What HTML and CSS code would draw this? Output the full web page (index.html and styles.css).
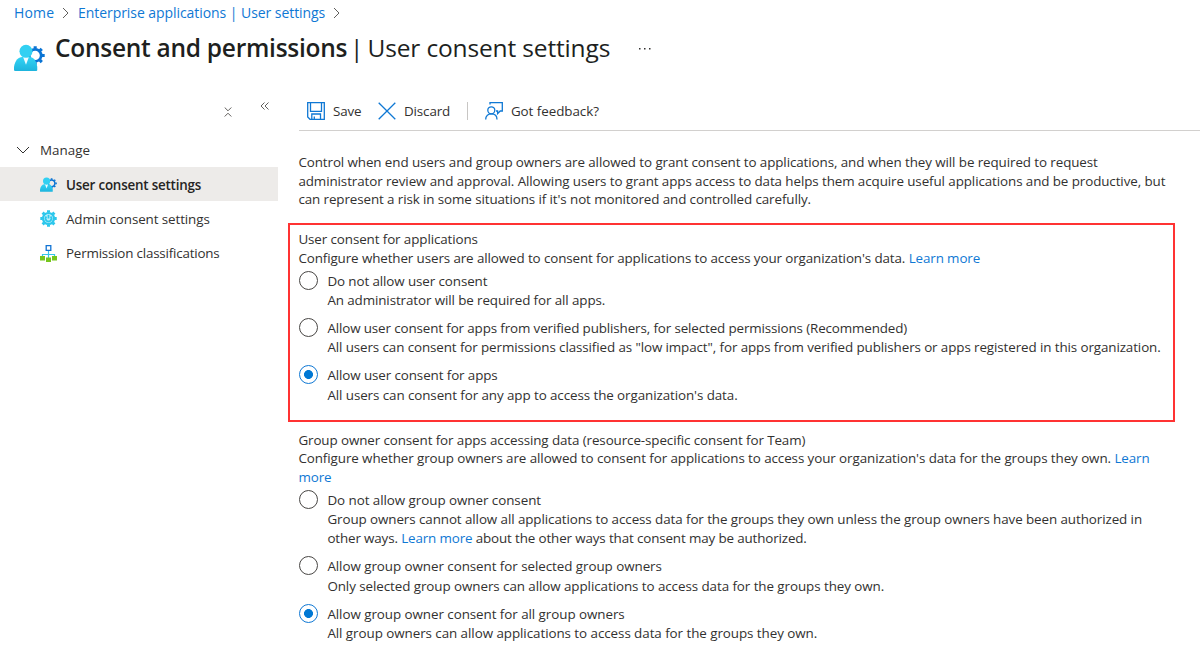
FILE: index.html
```html
<!DOCTYPE html>
<html lang="en">
<head>
<meta charset="utf-8">
<title>Consent and permissions</title>
<link rel="stylesheet" href="styles.css">
</head>
<body>
<svg width="0" height="0" class="defs" aria-hidden="true">
  <defs>
    <linearGradient id="cyan" x1="0" y1="0" x2="0" y2="1"><stop offset="0" stop-color="#32d4f5"/><stop offset="1" stop-color="#1eb4dd"/></linearGradient>
    <symbol id="user-gear" viewBox="0 0 30 26">
      <g transform="translate(20.500 11)" stroke="#0a74d4" fill="none">
        <circle r="5.800" stroke-width="2.600"/>
        <path stroke-width="3" d="M0-6.5V-9M0 6.5V9M6.5 0H9.2M4.6-4.6L6.400-6.400M4.6 4.6L6.400 6.400M-4.6-4.6L-6.400-6.400"/>
      </g>
      <path fill="url(#cyan)" d="M0 25V22C1 16 4 12.500 8 12.500H15C19 12.500 21.500 16 22.500 22V25Q22.500 26 21.500 26H1.200Q0 26 0 25Z"/>
      <path fill="#f3fcff" d="M8.800 12.500H14.400L11.600 20Z"/>
      <circle cx="11.600" cy="7" r="6.300" fill="#32d0f2"/>
    </symbol>
  </defs>
</svg>
<nav class="breadcrumb">
  <a class="crumb-home">Home</a>
  <svg class="sep" viewBox="0 0 7 12"><path d="M1 1l5 5-5 5"/></svg>
  <a class="crumb-app">Enterprise applications | User settings</a>
  <svg class="sep" viewBox="0 0 7 12"><path d="M1 1l5 5-5 5"/></svg>
</nav>
<header class="title">
  <svg class="title-icon"><use href="#user-gear"/></svg>
  <h1><b>Consent and permissions</b><span class="bar">|</span><span class="sub">User consent settings</span></h1>
  <svg class="dots" viewBox="0 0 12 2"><path d="M0 0h1.500v1.500H0zM5 0h1.500v1.500H5zM10 0h1.500v1.500H10z"/></svg>
</header>
<div class="layout">
  <aside class="side">
    <div class="side-tools">
      <svg class="collapse" viewBox="0 0 8 10"><path d="M.7.500L4 3.800 7.300.500M.7 9.500L4 6.200 7.300 9.500"/></svg>
      <svg class="chevrons" viewBox="0 0 9 8"><path d="M4.500.500L1 4l3.500 3.500M8.500.500L5 4l3.500 3.500"/></svg>
    </div>
    <div class="group"><svg class="down" viewBox="0 0 13 8"><path d="M.500 1l6 6 6-6"/></svg><span class="t-manage">Manage</span></div>
    <div class="item active"><svg class="ic"><use href="#user-gear"/></svg><span class="t-user">User consent settings</span></div>
    <div class="item"><svg class="ic" viewBox="0 0 17 17"><g transform="translate(8.500 8.500)" fill="none" stroke="#2cc7ec"><circle r="5.400" stroke-width="2.400"/><path stroke-width="3" d="M0-6V-8.200M0 6V8.200M6 0H8.200M-6 0H-8.200M4.200-4.200L5.900-5.900M4.200 4.200L5.900 5.900M-4.200-4.200L-5.900-5.900M-4.200 4.200L-5.900 5.900"/><circle r="4.200" fill="#b9effa" stroke="none"/><path stroke-width="1.800" d="M-2.100-2A2.900 2.900 0 1 0 2.100-2M0-3.800V0"/></g></svg><span class="t-admin">Admin consent settings</span></div>
    <div class="item"><svg class="ic tree" viewBox="0 0 17 17"><path fill="none" stroke="#35c6ea" stroke-width="1.200" d="M8.500 6v8M2.500 12V9.500h12V12"/><path fill="#fff" stroke="#1173d4" stroke-width="1.300" d="M6.200.700h4.600v4.600H6.200z"/><path fill="#76c61d" d="M0 11h5v4.500H0zM6 12.500h5V17H6zM12 11h5v4.500h-5z"/></svg><span class="t-perm">Permission classifications</span></div>
  </aside>
  <main class="main">
    <div class="toolbar">
      <svg class="save" viewBox="0 0 18 18"><path d="M.700.700h16.600v16.600H3L.700 15zM3.500.700v8.600h11V.700M4.800 17v-5h8.700v5M7.300 17v-2.600"/></svg><span class="t-save">Save</span>
      <svg class="discard" viewBox="0 0 18 18"><path d="M.700.700l16.600 16.600M17.300.700L.700 17.300"/></svg><span class="t-discard">Discard</span>
      <i class="divider"></i>
      <svg class="feedback" viewBox="0 0 18 18"><path d="M5 2.500V.700h12.300V9H15.200L12.600 11.600V9H11M.700 17.500C.700 13.500 3.200 11.800 6.300 11.800S12 13.500 12 17.500"/><circle cx="6.300" cy="8.300" r="3.500"/></svg><span class="t-feedback">Got feedback?</span>
    </div>
    <div class="intro">
      <div><span class="p1">Control when end users and group owners are allowed to grant consent to applications, and when they will be required to request</span></div>
      <div><span class="p2">administrator review and approval. Allowing users to grant apps access to data helps them acquire useful applications and be productive, but</span></div>
      <div><span class="p3">can represent a risk in some situations if it's not monitored and controlled carefully.</span></div>
    </div>
    <section class="boxed">
      <div><span class="q1">User consent for applications</span></div>
      <div><span class="q2">Configure whether users are allowed to consent for applications to access your organization's data. <a>Learn more</a></span></div>
      <div class="options">
        <div class="opt"><i class="radio"></i><div><div><span class="a1">Do not allow user consent</span></div><div><span class="a2">An administrator will be required for all apps.</span></div></div></div>
        <div class="opt"><i class="radio"></i><div><div><span class="a3">Allow user consent for apps from verified publishers, for selected permissions (Recommended)</span></div><div><span class="a4">All users can consent for permissions classified as "low impact", for apps from verified publishers or apps registered in this organization.</span></div></div></div>
        <div class="opt"><i class="radio on"></i><div><div><span class="a5">Allow user consent for apps</span></div><div><span class="a6">All users can consent for any app to access the organization's data.</span></div></div></div>
      </div>
    </section>
    <section class="plain">
      <div><span class="g1">Group owner consent for apps accessing data (resource-specific consent for Team)</span></div>
      <div><span class="g2">Configure whether group owners are allowed to consent for applications to access your organization's data for the groups they own. <a>Learn</a></span></div>
      <div><span class="g3"><a>more</a></span></div>
      <div class="options">
        <div class="opt"><i class="radio"></i><div><div><span class="b1">Do not allow group owner consent</span></div><div><span class="b2">Group owners cannot allow all applications to access data for the groups they own unless the group owners have been authorized in</span></div><div><span class="b3">other ways. <a>Learn more</a> about the other ways that consent may be authorized.</span></div></div></div>
        <div class="opt"><i class="radio"></i><div><div><span class="b4">Allow group owner consent for selected group owners</span></div><div><span class="b5">Only selected group owners can allow applications to access data for the groups they own.</span></div></div></div>
        <div class="opt"><i class="radio on"></i><div><div><span class="b6">Allow group owner consent for all group owners</span></div><div><span class="b7">All group owners can allow applications to access data for the groups they own.</span></div></div></div>
      </div>
    </section>
  </main>
</div>
</body>
</html>
```
FILE: styles.css
```css
* { box-sizing: border-box; }
body {
  margin: 0;
  height: 645px;
  overflow: hidden;
  background: #fff;
  color: #323130;
  font-family: "Open Sans", "Noto Sans", sans-serif;
  font-size: 13.4px;
  letter-spacing: -0.1px;
  white-space: nowrap;
}
.defs { display: block; height: 0; }
svg { flex: none; fill: none; }
a { color: #0f78d4; }

.breadcrumb { display: flex; align-items: center; height: 26px; padding: 0 0 2px 14px; font-size: 14px; }
.crumb-home { width: 48px; letter-spacing: 0.15px; }
.crumb-app { width: 255px; margin-left: 9px; letter-spacing: -0.06px; }
.sep { width: 7px; height: 12px; margin-top: 1px; stroke: #605e5c; stroke-width: 1; }

.title { display: flex; height: 60px; padding-left: 14px; }
.title-icon { width: 31px; height: 27px; margin-top: 17.5px; }
h1 { display: flex; margin: 0 0 0 10px; width: 584px; font-size: 24.5px; line-height: 44px; font-weight: 400; color: #201f1e; }
h1 b { width: 295px; font-weight: 600; letter-spacing: -0.27px; }
h1 .bar { width: 17.5px; }
h1 .sub { letter-spacing: -0.15px; }
.dots { width: 12px; height: 2px; margin-top: 22px; fill: #323130; }

.layout { display: flex; }
.side { width: 278px; flex: none; }
.side-tools { display: flex; height: 47px; padding: 15px 0 0 224px; }
.collapse { width: 8px; height: 10px; margin-top: 6px; stroke: #605e5c; }
.chevrons { width: 9px; height: 8px; margin: 1px 0 0 28px; stroke: #605e5c; }
.group { display: flex; align-items: center; height: 34px; padding-left: 16px; }
.down { width: 14px; height: 8px; margin-right: 10px; stroke: #323130; }
.t-manage { letter-spacing: 0; }
.item { display: flex; align-items: center; height: 34.3px; padding-left: 40px; }
.item span { padding-top: 1px; }
.item.active { width: 277.5px; background: #edebe9; font-weight: 600; color: #252423; }
.ic { width: 17px; height: 17px; margin-right: 9px; }
.tree { margin-top: 1px; }
.t-user { letter-spacing: -0.2px; }
.t-perm { letter-spacing: -0.2px; }

.main { width: 922px; padding-left: 10.4px; }
.toolbar { display: flex; align-items: center; height: 45px; margin-left: 10.5px; padding: 6px 0 0 8px; border-bottom: 1px solid #d2d0ce; }
.toolbar svg { width: 18px; height: 18px; stroke: #0f78d4; stroke-width: 1.3; }
.t-save { width: 46px; padding-left: 8px; }
.discard { margin-left: 7px; }
.t-discard { width: 71px; padding-left: 8px; }
.divider { width: 1px; height: 18px; background: #c8c6c4; }
.toolbar .feedback { margin-left: 17px; }
.t-feedback { padding-left: 8px; letter-spacing: -0.05px; }

.intro { padding: 21.9px 0 0 10px; line-height: 18.8px; height: 92px; }
.boxed { width: 886.6px; height: 199px; border: 2px solid #ff3333; padding: 5.2px 0 0 8px; line-height: 18.8px; }
.plain { padding: 8.5px 0 0 10px; line-height: 18.8px; }
.options { display: grid; gap: 8.8px; padding-top: 4.2px; line-height: 19.2px; }
.plain .options { padding-top: 4.1px; }
.opt { display: flex; }
.radio { flex: none; width: 19px; height: 19px; margin: -1px 9.4px 0 0.6px; border: 1px solid #484644; border-radius: 50%; }
.radio.on { border-color: #0f78d4; background: radial-gradient(circle, #0078d4 4.1px, transparent 4.8px); }

/* Per-line tracking */
.p1, .p2 { letter-spacing: -0.092px; }
.q2 { letter-spacing: -0.105px; }
.a3 { letter-spacing: -0.125px; }
.a6, .g2, .b2 { letter-spacing: -0.083px; }
.b1 { letter-spacing: -0.05px; }
.b3 { letter-spacing: -0.135px; }
.b4, .b6, .b7 { letter-spacing: -0.057px; }
.b5 { letter-spacing: -0.07px; }
```
